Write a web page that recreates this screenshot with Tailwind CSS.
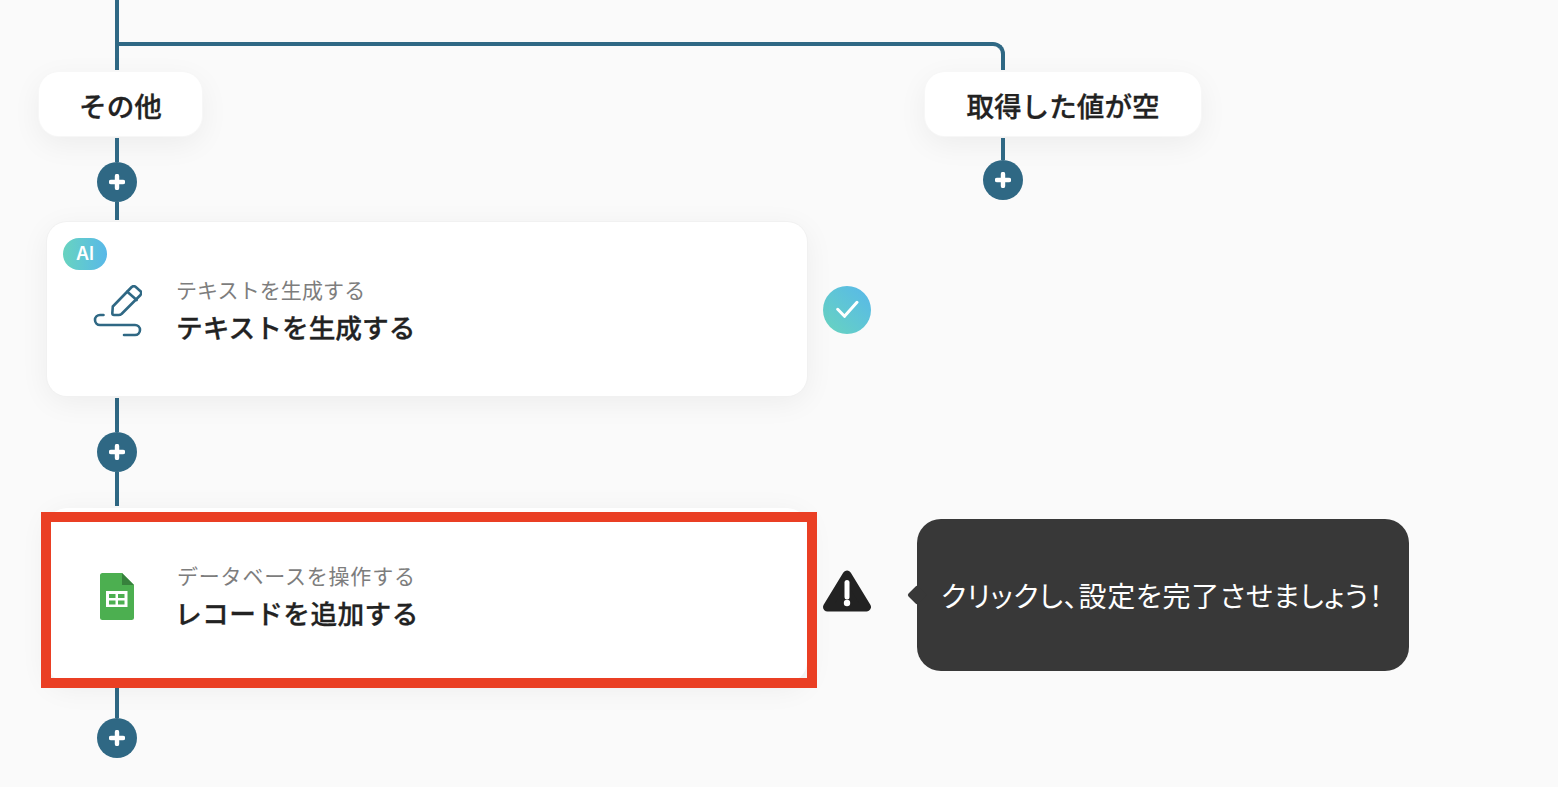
<!DOCTYPE html>
<html lang="ja">
<head>
  <meta charset="UTF-8">
  <title>フロー</title>
  <script src="https://cdn.jsdelivr.net/npm/@tailwindcss/browser@4"></script>
</head>
<body class="bg-[#fafafa] text-[#222222] font-['Noto_Sans_CJK_JP','Noto_Sans',sans-serif]">
  <div class="relative flex h-[787px] w-[1558px] overflow-hidden">

    <!-- branch connector -->
    <div class="absolute left-[117px] top-[42px] h-[28px] w-[888px] rounded-tr-[12px] border-t-4 border-r-4 border-[#2f6884]"></div>

    <!-- left branch -->
    <div class="w-[925px] shrink-0">
      <div class="ml-[115px] h-[70px] w-1 bg-[#2f6884]"></div>
      <div class="mt-[2px] ml-[39px] flex h-[64px] w-[163px] items-center justify-center rounded-[20px] bg-white pt-[3px] text-[27.6px] font-medium shadow-[0_0_0_1px_#f7f7f7,0_8px_30px_rgba(0,0,0,0.06)] [-webkit-text-stroke:0.3px_#222222]">その他</div>
      <div class="mt-[2px] ml-[115px] h-[24px] w-1 bg-[#2f6884]"></div>
      <div class="ml-[97px] flex h-10 w-10 items-center justify-center rounded-full bg-[#2f6884]">
        <svg class="h-4 w-4" viewBox="0 0 16 16"><path d="M8 2v12M2 8h12" stroke="#fff" stroke-width="4.4" stroke-linecap="round"/></svg>
      </div>
      <div class="ml-[115px] h-[18px] w-1 bg-[#2f6884]"></div>

      <!-- AI step -->
      <div class="mt-[2px] ml-[47px] flex items-center">
        <div class="relative flex h-[174px] w-[760px] shrink-0 items-start rounded-[20px] bg-white pt-[52px] pl-[43px] shadow-[0_0_0_1px_#f1f1f1,0_6px_30px_rgba(0,0,0,0.06)]">
          <div class="absolute left-[16px] top-[16px] flex h-8 w-11 items-center justify-center rounded-full bg-gradient-to-r from-[#68d3bf] to-[#59b8e8] pb-[1px] font-['Inter',sans-serif] text-[18px] font-semibold text-white">AI</div>
          <svg class="mt-[11px] h-[52px] w-[52px] shrink-0" viewBox="90 285 52 52" fill="none" stroke="#2f6884" stroke-width="2.6" stroke-linecap="round" stroke-linejoin="round">
            <path d="M112.8 306.5 L131.7 287 Q133.5 285.4 135.5 286.8 L140.5 291.2 Q142 293 140.5 295 L121.5 314 Q120.3 315 118.7 315 L114 315 Q112.3 315 112.3 313.3 Z"/>
            <path d="M127.3 291.7 L136.7 300"/>
            <path d="M103.5 315 L100 315 A5 5 0 0 0 100 325 L135 325 A5 5 0 0 1 135 335 L124 335"/>
          </svg>
          <div class="ml-[34px]">
            <div class="text-[21px] leading-[30px] tracking-[0.1px] text-[#7d7d7d]">テキストを生成する</div>
            <div class="mt-[8px] text-[26.7px] leading-[30px] font-medium [-webkit-text-stroke:0.3px_#222222]">テキストを生成する</div>
          </div>
        </div>
        <div class="mt-[2px] ml-4 flex h-12 w-12 shrink-0 items-center justify-center rounded-full bg-gradient-to-tr from-[#69d4bd] to-[#58b7ea]">
          <svg class="h-6 w-6" viewBox="0 0 24 24" fill="none" stroke="#fff" stroke-width="3" stroke-linecap="round" stroke-linejoin="round"><path d="M2.7 11.3 9.5 18.3 22 4.3"/></svg>
        </div>
      </div>

      <div class="mt-[2px] ml-[115px] h-[34px] w-1 bg-[#2f6884]"></div>
      <div class="ml-[97px] flex h-10 w-10 items-center justify-center rounded-full bg-[#2f6884]">
        <svg class="h-4 w-4" viewBox="0 0 16 16"><path d="M8 2v12M2 8h12" stroke="#fff" stroke-width="4.4" stroke-linecap="round"/></svg>
      </div>
      <div class="ml-[115px] h-[34px] w-1 bg-[#2f6884]"></div>

      <!-- sheets step -->
      <div class="relative mt-[2px] ml-[47px] flex items-center">
        <div class="flex h-[174px] w-[760px] shrink-0 items-start rounded-[20px] bg-white pt-[52px] pl-[53px] shadow-[0_6px_30px_rgba(0,0,0,0.06)]">
          <svg class="mt-[13px] h-[47px] w-[34px] shrink-0" viewBox="0 0 34 47">
            <path d="M2.5 0H22L34 12V44.5A2.5 2.5 0 0 1 31.5 47H2.5A2.5 2.5 0 0 1 0 44.5V2.5A2.5 2.5 0 0 1 2.500 0Z" fill="#4caf50"/>
            <path d="M22 0 34 12H22Z" fill="#37813c"/>
            <path d="M6 18h21.500v16H6Z" fill="#fff"/>
            <path d="M9 21h6.500v4H9ZM18 21h6.500v4H18ZM9 27.500h6.500v4H9ZM18 27.500h6.500v4H18Z" fill="#4caf50"/>
          </svg>
          <div class="ml-[43px]">
            <div class="text-[21px] leading-[30px] tracking-[0.8px] text-[#7d7d7d]">データベースを操作する</div>
            <div class="mt-[8px] -ml-[2px] text-[26.7px] leading-[30px] font-medium tracking-[0.4px] [-webkit-text-stroke:0.3px_#222222]">レコードを追加する</div>
          </div>
        </div>
        <div class="absolute -left-[6px] top-[4px] h-[176px] w-[776px] border-[10px] border-[#ea3f24]"></div>
        <svg class="-mt-[8px] ml-4 h-[42px] w-12 shrink-0" viewBox="0 0 48 42">
          <path d="M24 5 43.500 37H4.500Z" fill="#222" stroke="#222" stroke-width="9" stroke-linejoin="round"/>
          <path d="M24 12.500v14.500" stroke="#fff" stroke-width="5" stroke-linecap="round"/>
          <circle cx="24" cy="33" r="3.200" fill="#fff"/>
        </svg>
        <div class="absolute left-[870px] top-[11px] flex h-[152px] w-[492px] items-center rounded-[24px] bg-[#383838] pl-[24px] text-[28px] tracking-[0.75px] whitespace-nowrap text-white [font-feature-settings:'palt']">
          <div class="absolute -left-[7px] top-[69px] h-[14px] w-[14px] rotate-45 rounded-[2px] bg-[#383838]"></div>
          <span class="relative">クリックし、設定を完了させましょう！</span>
        </div>
      </div>

      <div class="mt-[2px] ml-[115px] h-[34px] w-1 bg-[#2f6884]"></div>
      <div class="ml-[97px] flex h-10 w-10 items-center justify-center rounded-full bg-[#2f6884]">
        <svg class="h-4 w-4" viewBox="0 0 16 16"><path d="M8 2v12M2 8h12" stroke="#fff" stroke-width="4.4" stroke-linecap="round"/></svg>
      </div>
    </div>

    <!-- right branch -->
    <div class="flex-1 pt-[72px]">
      <div class="flex h-[64px] w-[276px] items-center justify-center rounded-[20px] bg-white pt-[3px] text-[27.6px] font-medium shadow-[0_0_0_1px_#f7f7f7,0_8px_30px_rgba(0,0,0,0.06)] [-webkit-text-stroke:0.3px_#222222]">取得した値が空</div>
      <div class="mt-[2px] ml-[76px] h-[22px] w-1 bg-[#2f6884]"></div>
      <div class="ml-[58px] flex h-10 w-10 items-center justify-center rounded-full bg-[#2f6884]">
        <svg class="h-4 w-4" viewBox="0 0 16 16"><path d="M8 2v12M2 8h12" stroke="#fff" stroke-width="4.4" stroke-linecap="round"/></svg>
      </div>
    </div>
  </div>
</body>
</html>
